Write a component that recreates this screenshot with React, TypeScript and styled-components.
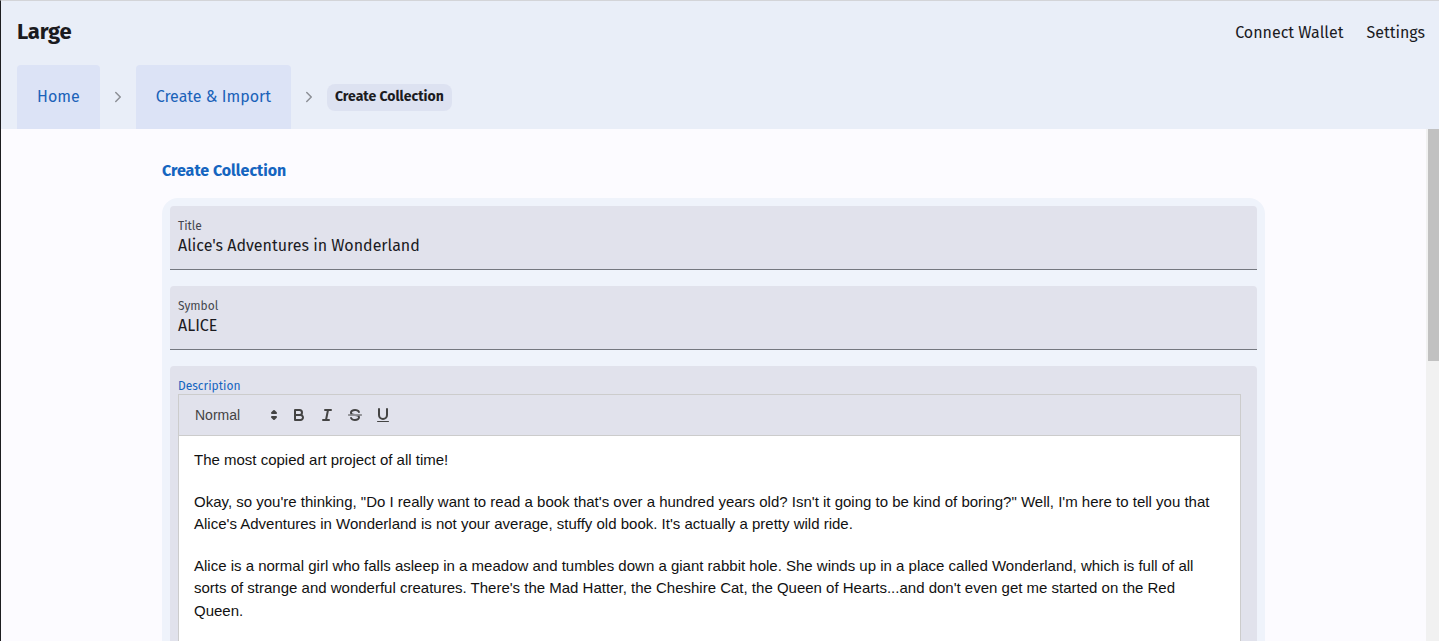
import styled, { createGlobalStyle } from 'styled-components'
import { ChevronRight } from 'lucide-react'

const GlobalStyle = createGlobalStyle`
  html, body {
    margin: 0;
    padding: 0;
    height: 100%;
  }
  body {
    font-family: "Fira Sans", Roboto, "Noto Sans", sans-serif;
    color: #1b1b1f;
    overflow: hidden;
  }
  #root {
    height: 100%;
  }
`;

const Page = styled.div`
  display: flex;
  flex-direction: column;
  height: 100vh;
  box-sizing: border-box;
  border-top: 1px solid #d3d4d8;
  border-left: 1px solid #1d1d20;
`;

const Header = styled.header`
  background: #e9eef8;
  flex: 0 0 auto;
`;

const TopBar = styled.div`
  display: flex;
  align-items: center;
  justify-content: space-between;
  height: 64px;
  padding: 0 14px 0 16px;
`;

const Brand = styled.div`
  font-size: 22px;
  line-height: 28px;
  margin-top: -2px;
  font-weight: 700;
  letter-spacing: -0.2px;
  color: #1b1b1f;
`;

const NavActions = styled.nav`
  display: flex;
  align-items: center;
  gap: 23px;
  margin-top: -2px;
`;

const NavButton = styled.span`
  font-size: 16px;
  color: #1b1b1f;
`;

const Crumbs = styled.div`
  display: flex;
  align-items: center;
  height: 64px;
  padding-left: 16px;
`;

const CrumbLink = styled.a`
  display: flex;
  align-items: center;
  height: 64px;
  padding: 0 20px 2px;
  box-sizing: border-box;
  background: #dce3f6;
  border-radius: 4px 4px 0 0;
  font-size: 16px;
  color: #1a62b9;
  text-decoration: none;
`;

const CrumbSep = styled.span`
  display: flex;
  align-items: center;
  justify-content: center;
  width: 36px;
  color: #8c8f96;
`;

const CrumbCurrent = styled.span`
  padding: 4px 8px 6px;
  background: #dde2f1;
  border-radius: 8px;
  font-size: 14px;
  font-weight: 700;
  color: #1b1b1f;
`;

const Main = styled.main`
  flex: 1 1 auto;
  display: flex;
  min-height: 0;
  background: #fcfbff;
`;

const ScrollArea = styled.div`
  flex: 1 1 auto;
  overflow-y: auto;
  scrollbar-width: none;

  &::-webkit-scrollbar {
    display: none;
  }
`;

const ScrollTrack = styled.div`
  flex: 0 0 13px;
  background: #f1f1f1;
  display: flex;
  justify-content: flex-end;
`;

const ScrollThumb = styled.div`
  width: 11px;
  height: 232px;
  background: #c1c1c1;
`;

const Content = styled.div`
  max-width: 1103px;
  margin: 0 auto;
  padding: 30px 0 48px;
  min-height: 1126px;
  box-sizing: border-box;
`;

const PageTitle = styled.h1`
  margin: 0 0 15px;
  font-size: 16px;
  line-height: 24px;
  font-weight: 700;
  color: #1565c0;
`;

const FormCard = styled.div`
  display: flex;
  flex-direction: column;
  gap: 16px;
  padding: 8px;
  background: #eff3fb;
  border-radius: 16px;
`;

const Field = styled.div<{ $editor?: boolean }>`
  display: flex;
  flex-direction: column;
  padding: ${(p) => (p.$editor ? '12px 16px 16px 8px' : '12px 8px 11px')};
  background: #e1e2ec;
  border-radius: 4px 4px 0 0;
  border-bottom: 1px solid ${(p) => (p.$editor ? '#1565c0' : '#74777f')};
`;

const FieldLabel = styled.label<{ $focused?: boolean }>`
  font-size: 12px;
  line-height: 16px;
  color: ${(p) => (p.$focused ? '#1565c0' : '#44474e')};
`;

const FieldValue = styled.div`
  font-size: 16px;
  line-height: 24px;
  color: #1b1b1f;
`;

const EditorShell = styled.div`
  display: flex;
  flex-direction: column;
  font-family: Helvetica, "Liberation Sans", Arial, sans-serif;
`;

const Toolbar = styled.div`
  display: flex;
  align-items: center;
  padding: 8px;
  border: 1px solid #ccc;
`;

const Picker = styled.span`
  display: flex;
  align-items: center;
  justify-content: space-between;
  width: 98px;
  height: 24px;
  padding: 0 2px 0 8px;
  box-sizing: border-box;
  font-size: 14px;
  font-weight: 500;
  color: #444;

  svg {
    width: 18px;
    height: 18px;
  }
`;

const ToolButton = styled.span`
  display: flex;
  align-items: center;
  justify-content: center;
  width: 28px;
  height: 24px;

  svg {
    width: 18px;
    height: 18px;
  }
`;

const EditorBody = styled.div`
  padding: 13px 15px 12px;
  background: #fff;
  border: 1px solid #ccc;
  border-top: 0;
  font-size: 15px;
  line-height: 22.5px;
  color: #111;
`;

const Para = styled.p`
  margin: 0 0 19px;
`;

const stroke = {
  fill: 'none',
  stroke: '#444',
  strokeWidth: 2,
  strokeLinecap: 'round' as const,
  strokeLinejoin: 'round' as const,
};

const paragraphs = [
  'The most copied art project of all time!',
  'Okay, so you\'re thinking, "Do I really want to read a book that\'s over a hundred years old? Isn\'t it going to be kind of boring?" Well, I\'m here to tell you that Alice\'s Adventures in Wonderland is not your average, stuffy old book. It\'s actually a pretty wild ride.',
  "Alice is a normal girl who falls asleep in a meadow and tumbles down a giant rabbit hole. She winds up in a place called Wonderland, which is full of all sorts of strange and wonderful creatures. There's the Mad Hatter, the Cheshire Cat, the Queen of Hearts...and don't even get me started on the Red Queen.",
  "Every chapter throws something new at her: potions that make her shrink, cakes that make her grow, a tea party that never ends and a croquet game played with flamingos. Nothing makes sense, and that's exactly the point.",
  "So grab a copy, curl up somewhere comfortable and follow Alice down the rabbit hole. You might be surprised how much fun a very old book can be.",
];

const App = () => {
  return (
    <Page>
      <GlobalStyle />
      <Header>
        <TopBar>
          <Brand>Large</Brand>
          <NavActions>
            <NavButton>Connect Wallet</NavButton>
            <NavButton>Settings</NavButton>
          </NavActions>
        </TopBar>
        <Crumbs>
          <CrumbLink href="#">Home</CrumbLink>
          <CrumbSep><ChevronRight size={18} strokeWidth={2} /></CrumbSep>
          <CrumbLink href="#">Create &amp; Import</CrumbLink>
          <CrumbSep><ChevronRight size={18} strokeWidth={2} /></CrumbSep>
          <CrumbCurrent>Create Collection</CrumbCurrent>
        </Crumbs>
      </Header>
      <Main>
        <ScrollArea>
          <Content>
            <PageTitle>Create Collection</PageTitle>
            <FormCard>
              <Field>
                <FieldLabel>Title</FieldLabel>
                <FieldValue>Alice's Adventures in Wonderland</FieldValue>
              </Field>
              <Field>
                <FieldLabel>Symbol</FieldLabel>
                <FieldValue>ALICE</FieldValue>
              </Field>
              <Field $editor>
                <FieldLabel $focused>Description</FieldLabel>
                <EditorShell>
                  <Toolbar>
                    <Picker>
                      Normal
                      <svg viewBox="0 0 18 18">
                        <polygon {...stroke} points="7 11 9 13 11 11 7 11" />
                        <polygon {...stroke} points="7 7 9 5 11 7 7 7" />
                      </svg>
                    </Picker>
                    <ToolButton>
                      <svg viewBox="0 0 18 18">
                        <path {...stroke} d="M5,4H9.5A2.5,2.5,0,0,1,12,6.5v0A2.5,2.5,0,0,1,9.5,9H5A0,0,0,0,1,5,9V4A0,0,0,0,1,5,4Z" />
                        <path {...stroke} d="M5,9h5.5A2.5,2.5,0,0,1,13,11.5v0A2.5,2.5,0,0,1,10.5,14H5a0,0,0,0,1,0,0V9A0,0,0,0,1,5,9Z" />
                      </svg>
                    </ToolButton>
                    <ToolButton>
                      <svg viewBox="0 0 18 18">
                        <line {...stroke} x1="7" x2="13" y1="4" y2="4" />
                        <line {...stroke} x1="5" x2="11" y1="14" y2="14" />
                        <line {...stroke} x1="8" x2="10" y1="14" y2="4" />
                      </svg>
                    </ToolButton>
                    <ToolButton>
                      <svg viewBox="0 0 18 18">
                        <path {...stroke} strokeWidth={1} d="M15.5,9H2.5" />
                        <path fill="#444" d="M9.007,8C6.542,7.791,6,7.519,6,6.5,6,5.792,7.283,5,9,5c1.571,0,2.765.679,2.969,1.309a1,1,0,0,0,1.9-.617C13.356,4.106,11.354,3,9,3,6.2,3,4,4.538,4,6.5a3.2,3.2,0,0,0,.5,1.843Z" />
                        <path fill="#444" d="M8.984,10C11.457,10.208,12,10.479,12,11.5c0,.708-1.283,1.5-3,1.5-1.571,0-2.765-.679-2.969-1.309a1,1,0,1,0-1.9.617C4.644,13.894,6.646,15,9,15c2.8,0,5-1.538,5-3.5a3.2,3.2,0,0,0-.5-1.843Z" />
                      </svg>
                    </ToolButton>
                    <ToolButton>
                      <svg viewBox="0 0 18 18">
                        <path {...stroke} d="M5,3V9a4.012,4.012,0,0,0,4,4H9a4.012,4.012,0,0,0,4-4V3" />
                        <rect fill="#444" height="1" rx="0.5" ry="0.5" width="12" x="3" y="15" />
                      </svg>
                    </ToolButton>
                  </Toolbar>
                  <EditorBody>
                    {paragraphs.map((text, i) => (
                      <Para key={i}>{text}</Para>
                    ))}
                  </EditorBody>
                </EditorShell>
              </Field>
            </FormCard>
          </Content>
        </ScrollArea>
        <ScrollTrack>
          <ScrollThumb />
        </ScrollTrack>
      </Main>
    </Page>
  );
};

export default App;
